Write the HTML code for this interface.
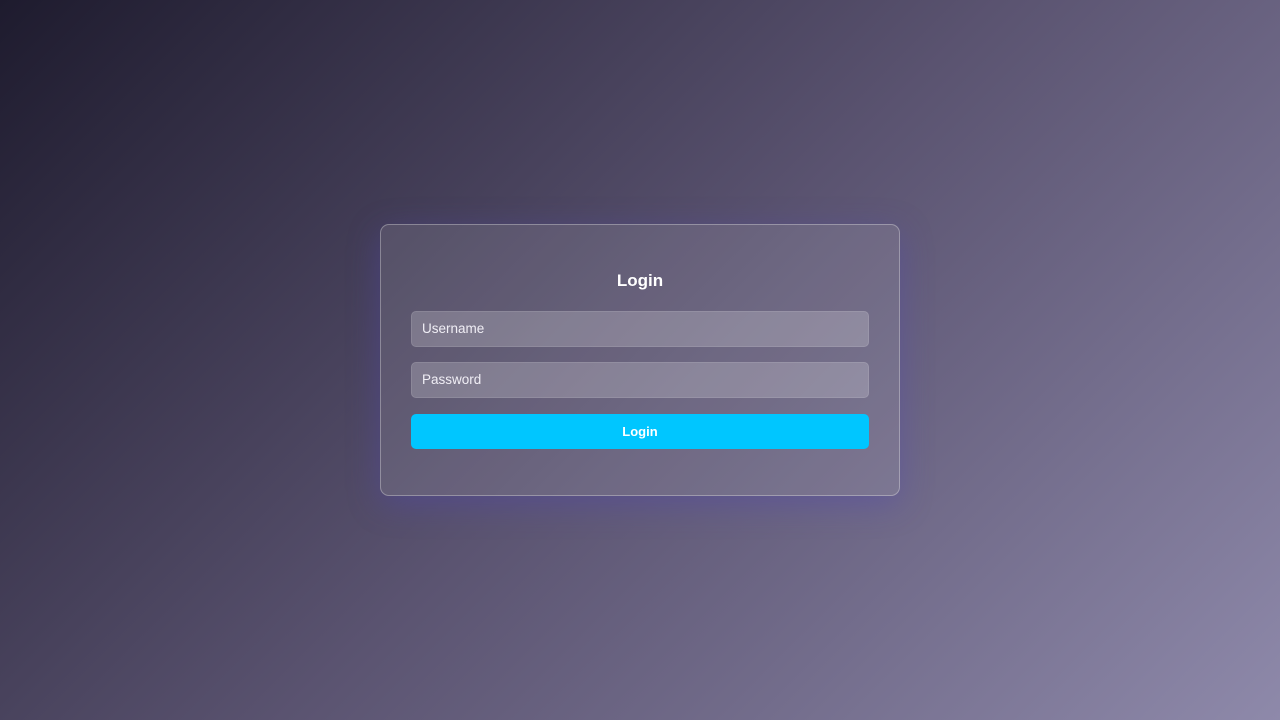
<!DOCTYPE html>
<html><head><style>
html,body{margin:0;width:1280px;height:720px;overflow:hidden}
body{background:linear-gradient(135deg,#1e1b2e 0%,#5a5370 50%,#8e89aa 100%);font-family:"Liberation Sans",sans-serif;position:relative}
.card{position:absolute;left:380px;top:224px;width:518px;height:270px;border:1px solid rgba(255,255,255,0.3);border-radius:9px;background:rgba(255,255,255,0.1);box-shadow:0 8px 32px rgba(80,70,180,0.4)}
h1{position:absolute;left:0;right:0;top:271px;margin:0;text-align:center;color:#fff;font-size:17px;font-weight:bold;line-height:20px}
.in{position:absolute;left:411px;width:458px;height:36px;border:1px solid rgba(255,255,255,0.1);border-radius:5px;background:rgba(255,255,255,0.2);color:#f0eef5;font-size:13.5px;line-height:34px;padding-left:10px;box-sizing:border-box}
.btn{position:absolute;left:411px;top:414px;width:458px;height:35px;border-radius:5px;background:#00c6ff;color:#fff;font-weight:bold;font-size:13px;text-align:center;line-height:35px}
</style></head><body>
<div class="card"></div>
<h1>Login</h1>
<div class="in" style="top:311px">Username</div>
<div class="in" style="top:362px">Password</div>
<div class="btn">Login</div>
</body></html>
